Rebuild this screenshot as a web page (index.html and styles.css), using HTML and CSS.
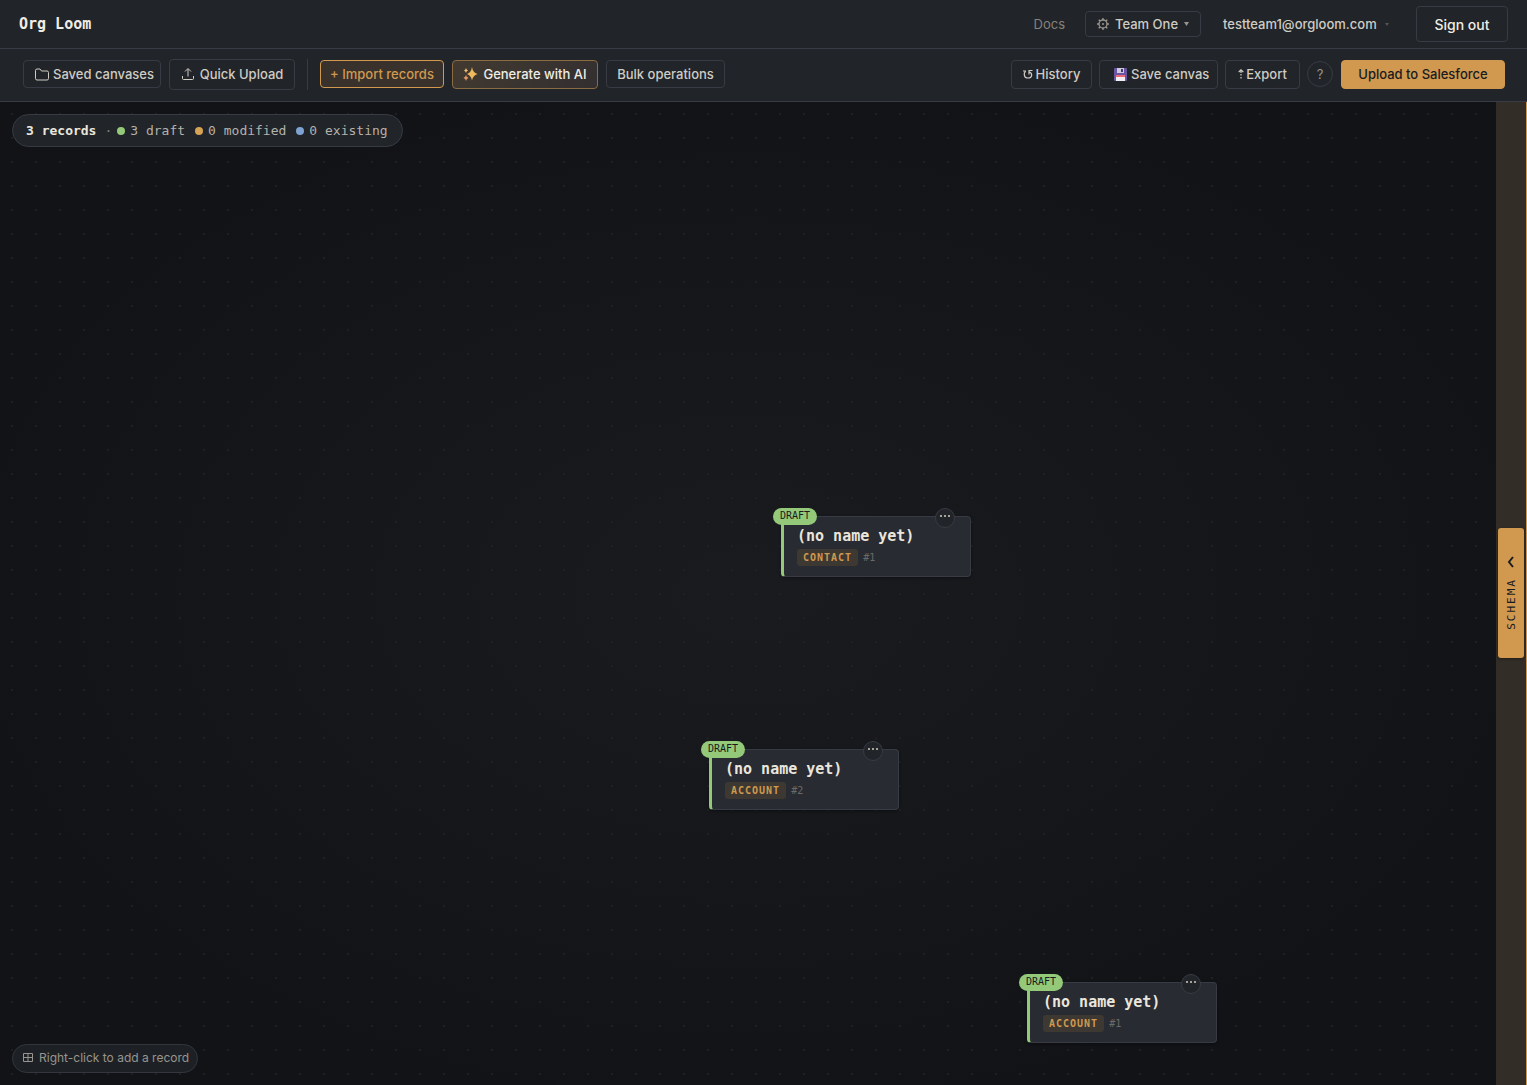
FILE: index.html
```html
<!DOCTYPE html>
<html lang="en">
<head>
	<meta charset="utf-8">
	<title>Org Loom</title>
	<link rel="stylesheet" href="styles.css">
</head>
<body>
	<header class="topbar">
		<a class="brand" href="#">Org Loom</a>
		<nav class="account">
			<a class="docs" href="#">Docs</a>
			<button class="btn team" type="button">
				<svg class="icon" width="12" height="12" viewBox="0 0 12 12"><circle cx="6" cy="6" r="4" stroke-width="1.300"/><path stroke-width="1.400" d="M6 0v2M6 10v2M0 6h2M10 6h2M1.700 1.700l1.400 1.400M8.900 8.900l1.400 1.400M10.300 1.700L8.900 3.100M3.100 8.900l-1.400 1.400"/><circle class="solid" cx="6" cy="6" r="1"/></svg>
				<span>Team One</span>
				<svg class="caret" width="5" height="4" viewBox="0 0 5 4"><path d="M0 0h5L2.500 4z"/></svg>
			</button>
			<button class="email" type="button">
				<span>testteam1@orgloom.com</span>
				<svg class="caret" width="4" height="3" viewBox="0 0 4 3"><path d="M0 0h4L2 3z"/></svg>
			</button>
			<button class="btn signout" type="button">Sign out</button>
		</nav>
	</header>

	<div class="toolbar">
		<div class="tools">
			<button class="btn saved" type="button">
				<svg class="icon" width="14" height="14" viewBox="0 0 14 14"><path d="M.5 3.500a1.500 1.500 0 0 1 1.500-1.500h3l1.500 2H12a1.500 1.500 0 0 1 1.500 1.500V11.500a1.500 1.500 0 0 1-1.500 1.500H2A1.500 1.500 0 0 1 .5 11.500z"/></svg>
				<span>Saved canvases</span>
			</button>
			<button class="btn quick" type="button">
				<svg class="icon" width="14" height="14" viewBox="0 0 14 14"><path d="M7 9.500V2M4 4.500l3-3 3 3M1.500 9v2.500a1 1 0 0 0 1 1h9a1 1 0 0 0 1-1V9"/></svg>
				<span>Quick Upload</span>
			</button>
			<span class="divider"></span>
			<button class="btn import" type="button">+ Import records</button>
			<button class="btn generate" type="button">
				<svg width="15" height="14" viewBox="0 0 15 14"><path fill="#f0b95c" d="M9 0q.8 5.500 5.500 7Q9.800 8.500 9 13.500 8.200 8.500 4 7 8.200 5.500 9 0z"/><path fill="#e59a62" d="M3 8q.4 2.200 2.500 3Q3.400 11.600 3 14 2.600 11.600.5 11 2.600 10.200 3 8z"/><path fill="#edc06f" d="M3 1q.3 1.700 2 2.500Q3.300 4.200 3 6 2.700 4.200 1 3.500 2.700 2.700 3 1z"/></svg>
				<span>Generate with AI</span>
			</button>
			<button class="btn bulk" type="button">Bulk operations</button>
		</div>
		<div class="actions">
			<button class="btn tall history" type="button">
				<svg class="icon" width="10" height="10" viewBox="0 0 10 10"><path stroke-width="1.200" d="M0 2h3M2.500 2.200C.5 4 .7 9 5 9c4.300 0 4.800-4.500 1.500-6M9.500 1.500H6v4"/></svg>
				<span>History</span>
			</button>
			<button class="btn tall save" type="button">
				<svg width="13" height="13" viewBox="0 0 13 13"><path fill="#6a55a5" d="M0 1a1 1 0 0 1 1-1h11a1 1 0 0 1 1 1v11a1 1 0 0 1-1 1H1a1 1 0 0 1-1-1z"/><path fill="#cfc9dd" d="M3 0h7v5H3z"/><path fill="#443a70" d="M7 1h2v3H7z"/><path fill="#f2eef5" d="M2 7h9v6H2z"/><path fill="#ec6a78" d="M2 7h9v2H2z"/></svg>
				<span>Save canvas</span>
			</button>
			<button class="btn tall export" type="button">
				<svg class="icon" width="6" height="10" viewBox="0 0 6 10"><path stroke-width="1.200" d="M.7 3L3 .9 5.300 3M3 1v3M3 5v1.500M3 8v1.500"/></svg>
				<span>Export</span>
			</button>
			<button class="help" type="button" aria-label="Help">?</button>
			<button class="btn tall upload" type="button">Upload to Salesforce</button>
		</div>
	</div>

	<main class="workspace">
		<section class="canvas">
			<div class="stats">
				<strong>3 records</strong>
				<span class="sep">·</span>
				<span class="stat draft">3 draft</span>
				<span class="stat modified">0 modified</span>
				<span class="stat existing">0 existing</span>
			</div>

			<article class="record contact-1">
				<span class="badge">DRAFT</span>
				<button class="more" type="button" aria-label="More"><i></i><i></i><i></i></button>
				<h2>(no name yet)</h2>
				<p><span class="type">CONTACT</span><span class="num">#1</span></p>
			</article>
			<article class="record account-2">
				<span class="badge">DRAFT</span>
				<button class="more" type="button" aria-label="More"><i></i><i></i><i></i></button>
				<h2>(no name yet)</h2>
				<p><span class="type">ACCOUNT</span><span class="num">#2</span></p>
			</article>
			<article class="record account-1">
				<span class="badge">DRAFT</span>
				<button class="more" type="button" aria-label="More"><i></i><i></i><i></i></button>
				<h2>(no name yet)</h2>
				<p><span class="type">ACCOUNT</span><span class="num">#1</span></p>
			</article>

			<div class="hint">
				<svg class="icon" width="10" height="9" viewBox="0 0 10 9"><path d="M.5.5h9v8h-9zM5 .5v8M.5 4.500h9"/></svg>
				<span>Right-click to add a record</span>
			</div>
		</section>

		<aside class="rail">
			<button class="schema" type="button">
				<svg width="8" height="12" viewBox="0 0 8 12"><path d="M6 1L2 6l4 5"/></svg>
				<span>SCHEMA</span>
			</button>
		</aside>
	</main>
</body>
</html>
```
FILE: styles.css
```css
*
{
	box-sizing: border-box;
}

body
{
	margin: 0;
	min-height: 100vh;
	display: flex;
	flex-direction: column;
	background: #121317;
	color: #cfccc4;
	font-family: Inter, "Liberation Sans", sans-serif;
	font-size: 13px;
}

button
{
	font: inherit;
	color: inherit;
	background: none;
	border: 0;
	padding: 0;
	cursor: pointer;
}

a
{
	color: inherit;
	text-decoration: none;
}

svg
{
	flex: none;
}

.icon
{
	fill: none;
	stroke: currentColor;
}

.icon .solid
{
	fill: currentColor;
	stroke: none;
}

.caret
{
	fill: currentColor;
}

/* top bar */

.topbar
{
	height: 49px;
	display: flex;
	align-items: center;
	justify-content: space-between;
	padding: 0 19px;
	background: #212429;
	border-bottom: 1px solid #383b44;
}

.brand
{
	font-family: "DejaVu Sans Mono", monospace;
	font-size: 15px;
	font-weight: bold;
	color: #f0ede4;
}

.account
{
	display: flex;
	align-items: center;
}

.docs
{
	margin-right: 20px;
	color: #85827b;
}

.btn
{
	height: 28px;
	display: flex;
	align-items: center;
	justify-content: center;
	gap: 5px;
	border: 1px solid #383b44;
	border-radius: 4px;
	font-weight: 500;
	white-space: nowrap;
}

.btn.tall
{
	height: 29px;
}

.team
{
	height: 26px;
	min-width: 116px;
	gap: 6px;
}

.team svg
{
	color: #98958e;
}

.email
{
	display: flex;
	align-items: center;
	justify-content: space-between;
	min-width: 166px;
	margin: 0 27px 0 22px;
	gap: 8px;
	font-weight: 500;
}

.email .caret
{
	color: #55544f;
}

.signout
{
	height: 36px;
	min-width: 92px;
	font-size: 14px;
	color: #f0ede4;
}

/* toolbar */

.toolbar
{
	height: 53px;
	display: flex;
	align-items: center;
	justify-content: space-between;
	padding: 0 22px 2px 23px;
	background: #212429;
	border-bottom: 1px solid #383b44;
}

.tools
{
	display: flex;
	align-items: center;
	gap: 8px;
}

.actions
{
	display: flex;
	align-items: center;
	gap: 7px;
}

.saved
{
	min-width: 138px;
	justify-content: flex-start;
	padding: 0 6px 0 11px;
	gap: 4px;
}

.quick
{
	height: 31px;
	min-width: 126px;
}

.divider
{
	width: 1px;
	height: 31px;
	margin: 0 4px;
	background: #383b44;
}

.import
{
	min-width: 124px;
	background: #39322c;
	border-color: #d0994f;
	color: #d0994f;
}

.generate
{
	height: 29px;
	min-width: 146px;
	background: linear-gradient(135deg, #423a30, #332f30);
	border-color: #8a6b42;
	color: #f0ede4;
}

.bulk
{
	min-width: 119px;
}

.history
{
	min-width: 81px;
	gap: 3px;
}

.save
{
	min-width: 119px;
	justify-content: flex-start;
	padding: 0 7px 0 14px;
	gap: 4px;
}

.export
{
	min-width: 75px;
	gap: 2px;
}

.help
{
	width: 26px;
	height: 26px;
	border: 1px solid #383b44;
	border-radius: 50%;
	color: #98958e;
}

.upload
{
	min-width: 164px;
	margin-left: 1px;
	background: #d0994f;
	border-color: #d0994f;
	color: #1a1b1f;
}

/* canvas */

.workspace
{
	flex: 1;
	display: flex;
}

.canvas
{
	position: relative;
	flex: 1;
	display: flex;
	flex-direction: column;
	align-items: flex-start;
	justify-content: space-between;
	padding: 12px;
	overflow: hidden;
	background:
		radial-gradient(circle, #1e2024 1px, transparent 1px) 0 0 / 24px 24px,
		radial-gradient(ellipse at center, #1a1b1f, #121317 75%);
}

.stats
{
	height: 33px;
	display: flex;
	align-items: center;
	gap: 10px;
	padding: 0 14px 0 13px;
	border: 1px solid #383b44;
	border-radius: 17px;
	background: #212429;
	font-family: "DejaVu Sans Mono", monospace;
	white-space: nowrap;
}

.stats strong
{
	color: #ebe6dc;
}

.sep
{
	margin: 0 -5px 0 -2px;
	color: #85827b;
}

.stat
{
	display: flex;
	align-items: center;
	gap: 5px;
	color: #b5b2aa;
}

.stat::before
{
	content: "";
	width: 8px;
	height: 8px;
	border-radius: 50%;
	background: #94c979;
}

.stat.modified::before
{
	background: #d6a354;
}

.stat.existing::before
{
	background: #7ea3d3;
}

.record
{
	position: absolute;
	width: 190px;
	height: 61px;
	padding: 9px 13px;
	border: 1px solid #383b44;
	border-left: 3px solid #94c979;
	border-radius: 4px;
	background: #282b32;
	box-shadow: 0 1px 3px rgba(0, 0, 0, .4);
}

.contact-1
{
	left: 781px;
	top: 414px;
}

.account-2
{
	left: 709px;
	top: 647px;
}

.account-1
{
	left: 1027px;
	top: 880px;
}

.record h2
{
	margin: 0;
	font-family: "DejaVu Sans Mono", monospace;
	font-size: 15px;
	line-height: 20px;
	color: #ebe6dc;
}

.record p
{
	display: flex;
	align-items: center;
	gap: 5px;
	margin: 3px 0 0;
	font-family: "DejaVu Sans Mono", monospace;
	font-size: 10px;
	line-height: 17px;
}

.type
{
	padding: 0 6px;
	border-radius: 3px;
	background: #3d3832;
	color: #d0994f;
	font-weight: bold;
	letter-spacing: 1px;
}

.num
{
	color: #6c6a66;
}

.badge
{
	position: absolute;
	left: -11px;
	top: -9px;
	padding: 0 7px 1px;
	border-radius: 9px;
	background: #94c979;
	color: #1a1b1f;
	font-family: "DejaVu Sans Mono", monospace;
	font-size: 10px;
	line-height: 16px;
}

.more
{
	position: absolute;
	right: 15px;
	top: -9px;
	width: 20px;
	height: 20px;
	display: flex;
	align-items: center;
	justify-content: center;
	gap: 2px;
	padding-bottom: 4px;
	border: 1px solid #383b44;
	border-radius: 50%;
	background: #212429;
}

.more i
{
	width: 2px;
	height: 2px;
	background: #a5a29b;
}

.hint
{
	height: 29px;
	display: flex;
	align-items: center;
	gap: 6px;
	padding: 0 8px 2px 10px;
	border: 1px solid #33363d;
	border-radius: 15px;
	background: #1d2025;
	color: #98958e;
	font-size: 12px;
	white-space: nowrap;
}

/* schema rail */

.rail
{
	width: 31px;
	display: flex;
	align-items: center;
	padding: 0 0 2px 2px;
	background: #332d28;
	border-right: 1px solid #d0994f;
}

.schema
{
	width: 26px;
	height: 130px;
	display: flex;
	flex-direction: column;
	align-items: center;
	justify-content: center;
	gap: 10px;
	border-radius: 3px;
	background: #d0994f;
	color: #1a1b1f;
	box-shadow: 0 1px 3px rgba(0, 0, 0, .4);
}

.schema svg
{
	fill: none;
	stroke: currentColor;
	stroke-width: 2;
}

.schema span
{
	writing-mode: vertical-rl;
	transform: rotate(180deg);
	font-family: "DejaVu Sans Mono", monospace;
	font-size: 11px;
	letter-spacing: 2px;
}
```
